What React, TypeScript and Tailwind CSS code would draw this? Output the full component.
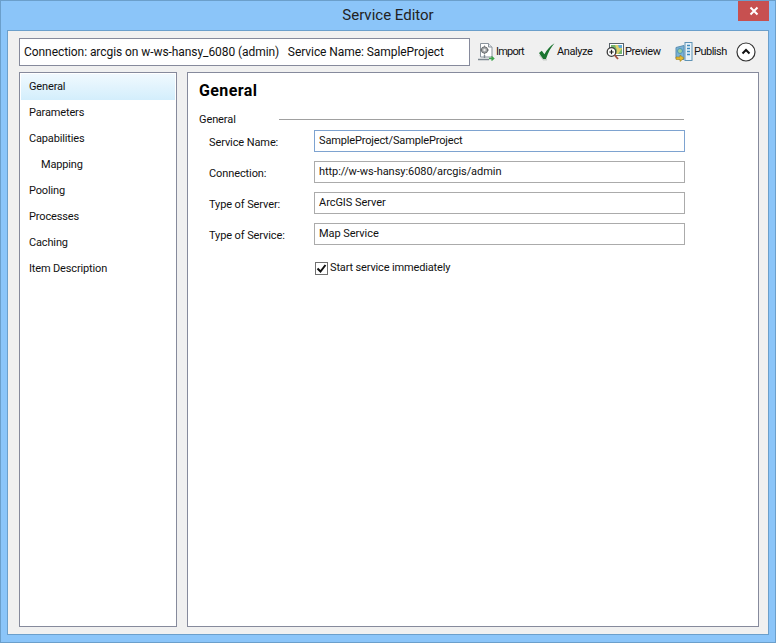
const font = { fontFamily: 'Roboto, "Noto Sans", sans-serif' };

const navItems = ["General", "Parameters", "Capabilities", "Mapping", "Pooling", "Processes", "Caching", "Item Description"];

const fields = [
  { label: "Service Name:", value: "SampleProject/SampleProject", focused: true },
  { label: "Connection:", value: "http://w-ws-hansy:6080/arcgis/admin", focused: false },
  { label: "Type of Server:", value: "ArcGIS Server", focused: false },
  { label: "Type of Service:", value: "Map Service", focused: false },
];

function ImportIcon() {
  return (
    <svg width="18" height="20" viewBox="0 0 18 20">
      <path d="M3.5 1.5h8l3.5 3.5v10h-11.5z" fill="#fff" stroke="#8a939c" />
      <path d="M11.5 1.5v3.5h3.5" fill="#e4e8ec" stroke="#8a939c" />
      <circle cx="7.5" cy="8" r="3.2" fill="#a3a6a8" stroke="#6c7072" />
      <circle cx="7.5" cy="8" r="1.2" fill="#eee" />
      <path d="M7.5 3.6v1.2M7.5 11.2v1.2M3.1 8h1.2M10.7 8h1.2" stroke="#6c7072" />
      <path d="M7.5 13v3M1 17.5h11" stroke="#7d8890" strokeWidth="1.4" />
      <path d="M12 16.5h4M14.500 14.500l2.200 2-2.200 2" fill="none" stroke="#3ca24a" strokeWidth="1.4" />
    </svg>
  );
}

function AnalyzeIcon() {
  return (
    <svg width="18" height="18" viewBox="0 0 18 18">
      <path d="M1.500 12l4 4.800h3.500" fill="none" stroke="#c9cdca" strokeWidth="1.400" />
      <path d="M1 10l2.800-2.200 2.600 3.400c2.500-4.500 5.500-8 10.100-11-3.500 4-6.300 9-8.500 15.800h-2.800z" fill="#1b7430" />
    </svg>
  );
}

function PreviewIcon() {
  return (
    <svg width="18" height="18" viewBox="0 0 18 18">
      <rect x="3.500" y="0.500" width="14" height="12" fill="#fff" stroke="#59636b" />
      <rect x="5" y="2" width="11" height="9" fill="#75b66f" />
      <path d="M9 2h7v3.500l-4 5.500h-2l1-4z" fill="#e1cf6b" />
      <path d="M12 2h4v3h-3z" fill="#5fa9d6" />
      <circle cx="5.500" cy="9" r="4.300" fill="#fff" stroke="#3c3c3c" strokeWidth="1.300" />
      <path d="M3.300 9h4.400M5.500 6.800v4.400" stroke="#222" strokeWidth="1.200" />
      <path d="M8.500 12l3.500 4" stroke="#a5503e" strokeWidth="1.800" />
    </svg>
  );
}

function PublishIcon() {
  return (
    <svg width="18" height="20" viewBox="0 0 18 20">
      <path d="M1 5.500l8-2v14l-8-1z" fill="#79b2d8" stroke="#5a8eb0" />
      <circle cx="5" cy="9" r="2.500" fill="#9ed09b" stroke="#4e93b8" />
      <rect x="10" y="0.500" width="7" height="18" fill="#e9f3fa" stroke="#5f93b5" />
      <path d="M12 3.500h3M12 6.500h3M12 9.500h3M12 12.500h3" stroke="#3f8bbc" strokeWidth="1.300" />
      <path d="M1 15h4v-2l4 3.200-4 3.200v-2h-4z" fill="#e6bb2e" stroke="#9c7a18" strokeWidth="0.600" />
    </svg>
  );
}

function CollapseIcon() {
  return (
    <svg width="20" height="20" viewBox="0 0 20 20">
      <circle cx="10" cy="10" r="9" fill="#fff" stroke="#333" strokeWidth="1.200" />
      <path d="M6.500 11.500l3.500-3.500 3.500 3.500" fill="none" stroke="#111" strokeWidth="2" />
    </svg>
  );
}

const tools = [
  { label: "Import", icon: <ImportIcon />, className: "w-[61px] tracking-[-0.8px]" },
  { label: "Analyze", icon: <AnalyzeIcon />, className: "w-[68px] tracking-[-0.4px]" },
  { label: "Preview", icon: <PreviewIcon />, className: "w-[69px] tracking-[-0.4px]" },
  { label: "Publish", icon: <PublishIcon />, className: "w-[61px] tracking-[-0.5px]" },
];

export default function App() {
  return (
    <div style={font} className="flex h-[643px] w-[776px] flex-col overflow-hidden border border-[#6b9fcb] bg-[#8bc5f9] text-[11px] text-[#111]">
      <div className="relative flex h-[29px] shrink-0 items-center justify-center text-[15px] text-[#222]">
        Service Editor
        <div className="absolute top-0 right-[6px] flex h-[20px] w-[31px] items-center justify-center bg-[#c75050]">
          <svg width="10" height="10" viewBox="0 0 10 10">
            <path d="M1.500 1.500l7 7M8.500 1.500l-7 7" stroke="#fff" strokeWidth="2" />
          </svg>
        </div>
      </div>

      <div className="mx-[6px] flex min-h-0 flex-1 flex-col border border-[#6b9fcb] bg-[#f0f0f0] px-[11px] pt-[7px]">
        <div className="flex h-[28px] shrink-0 items-center">
          <div className="flex h-[28px] w-[451px] items-center border border-[#868a9c] bg-white pl-[4px] text-[12px] tracking-[-0.07px] whitespace-pre">
            Connection: arcgis on w-ws-hansy_6080 (admin)   Service Name: SampleProject
          </div>
          <div className="ml-[7px] flex items-center">
            {tools.map((t) => (
              <div key={t.label} className={`flex items-center gap-px ${t.className}`}>
                {t.icon}
                <span>{t.label}</span>
              </div>
            ))}
            <CollapseIcon />
          </div>
        </div>

        <div className="mt-[6px] flex h-[555px] gap-[10px]">
          <div className="w-[158px] shrink-0 border border-[#868a9c] bg-white p-[1px]">
            {navItems.map((item, i) => (
              <div
                key={item}
                className={`flex h-[26px] items-center tracking-[-0.15px] ${item === "Mapping" ? "pl-[20px]" : "pl-[8px]"} ${i === 0 ? "bg-gradient-to-b from-[#f0f9fe] to-[#d3eefc]" : ""}`}
              >
                {item}
              </div>
            ))}
          </div>

          <div className="w-[572px] shrink-0 border border-[#868a9c] bg-white pt-[8px] pl-[11px]">
            <h1 className="text-[16px] leading-[20px] font-bold tracking-[0.4px] text-black">General</h1>
            <div className="mt-[10px] flex h-[16px] w-[485px] items-center">
              <span className="w-[80px] pt-[2px] tracking-[-0.1px]">General</span>
              <div className="mt-px h-px flex-1 bg-[#a0a0a0]" />
            </div>
            <div className="mt-[3px] flex flex-col gap-[9px] pl-[10px]">
              {fields.map((f) => (
                <div key={f.label} className="flex items-center">
                  <span className="w-[105px] pt-[4px] tracking-[-0.1px]">{f.label}</span>
                  <div className={`flex h-[22px] w-[371px] items-start border pl-[4px] leading-[20px] ${f.focused ? "border-[#7ea3d0] tracking-[-0.15px]" : "border-[#ababab] tracking-[-0.05px]"}`}>
                    {f.value}
                  </div>
                </div>
              ))}
            </div>
            <div className="mt-[15px] ml-[116px] flex h-[16px] items-center gap-[2px] tracking-[-0.15px]">
              <svg width="13" height="13" viewBox="0 0 13 13">
                <rect x="0.500" y="0.500" width="12" height="12" fill="#fff" stroke="#707070" />
                <path d="M2.500 6.500l3 3 5-6.500" fill="none" stroke="#111" strokeWidth="2" />
              </svg>
              <span>Start service immediately</span>
            </div>
          </div>
        </div>
      </div>
      <div className="h-[7px] shrink-0" />
    </div>
  );
}
